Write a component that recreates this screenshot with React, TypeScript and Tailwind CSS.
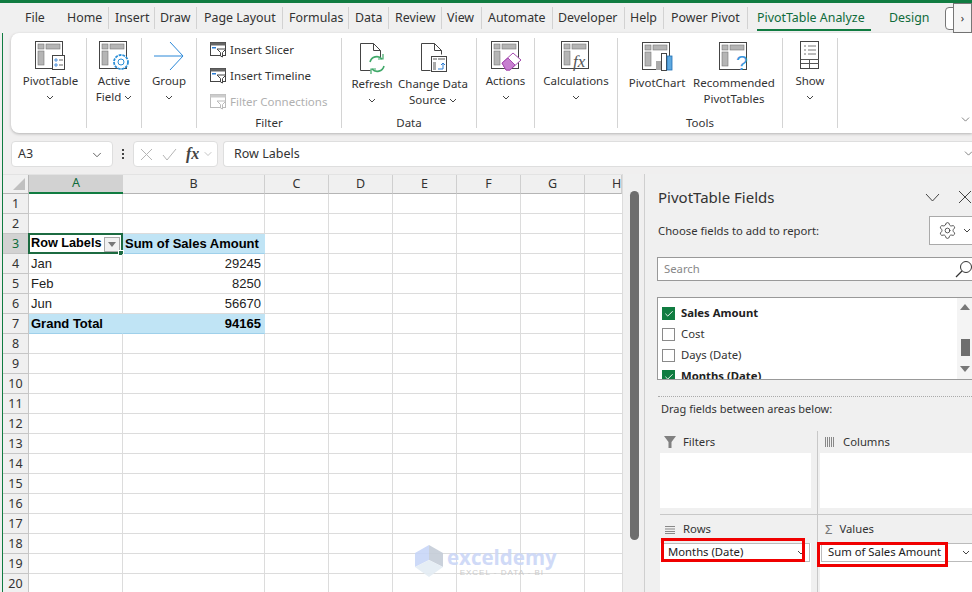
import React from "react";
import { ChevronDown, Check, Settings } from "lucide-react";

const ui = "font-['Noto_Sans','Open_Sans',sans-serif]";

const tabs = [
  { label: "File", cls: "w-[42px]" },
  { label: "Home", cls: "w-[41px]" },
  { label: "Insert", cls: "w-[46px] pl-[6px] border-l border-[#d2d2d2]" },
  { label: "Draw", cls: "w-[42px] pl-[5px] border-l border-[#d2d2d2]" },
  { label: "Page Layout", cls: "w-[86px] pl-[7px] border-l border-[#d2d2d2]" },
  { label: "Formulas", cls: "w-[66px] pl-[6px] border-l border-[#d2d2d2]" },
  { label: "Data", cls: "w-[40px] pl-[6px] border-l border-[#d2d2d2]" },
  { label: "Review", cls: "w-[53px] pl-[6px] border-l border-[#d2d2d2]" },
  { label: "View", cls: "w-[40px] pl-[5px] border-l border-[#d2d2d2]" },
  { label: "Automate", cls: "w-[71px] pl-[6px] border-l border-[#d2d2d2]" },
  { label: "Developer", cls: "w-[72px] pl-[5px] border-l border-[#d2d2d2]" },
  { label: "Help", cls: "w-[39px] pl-[5px] border-l border-[#d2d2d2]" },
  { label: "Power Pivot", cls: "w-[84px] pl-[7px] border-l border-[#d2d2d2]" },
];

function Base({ children, w = 34 }: { children?: React.ReactNode; w?: number }) {
  return (
    <svg width={w} height="32" viewBox={`0 0 ${w} 32`} fill="none">
      <rect x="1.5" y="1.5" width="27" height="27" fill="#fff" stroke="#444" />
      <rect x="4" y="4" width="6" height="5" fill="#b5b5b5" stroke="#777" strokeWidth=".6" />
      <rect x="12" y="4" width="14" height="5" fill="#b5b5b5" stroke="#777" strokeWidth=".6" />
      <rect x="4" y="11" width="6" height="14" fill="#b5b5b5" stroke="#777" strokeWidth=".6" />
      {children}
    </svg>
  );
}

function Chev({ className = "" }: { className?: string }) {
  return (
    <svg width="8" height="5" viewBox="0 0 8 5" fill="none" className={className}>
      <path d="M1 1l3 3 3-3" stroke="#444" strokeWidth="1" />
    </svg>
  );
}

function Big({ icon, lines, chevInline, chevBelow, textCls = "mt-[1px]" }: { icon: React.ReactNode; lines: string[]; chevInline?: boolean; chevBelow?: boolean; textCls?: string }) {
  return (
    <div className="flex flex-col items-center">
      <div className="h-[32px] flex items-center justify-center">{icon}</div>
      <div className={`${textCls} flex flex-col items-center text-[11.5px] leading-[16px] text-[#333] whitespace-nowrap`}>
        {lines.map((l, i) => (
          <div key={l} className="h-[16px] flex items-center gap-[3px]">
            {l}
            {chevInline && i === lines.length - 1 && <Chev />}
          </div>
        ))}
        {chevBelow && <div className="h-[16px] flex items-center"><Chev /></div>}
      </div>
    </div>
  );
}

function Group({ w, label, children, cls = "" }: { w: string; label?: string; children: React.ReactNode; cls?: string }) {
  return (
    <div className={`${w} h-[90px] mt-[5px] border-r border-[#d4d4d4] flex flex-col relative shrink-0`}>
      <div className={`flex ${cls}`}>{children}</div>
      {label && <div className="mt-auto -mb-[2px] text-center text-[11.5px] leading-[14px] text-[#333]">{label}</div>}
    </div>
  );
}

function SlicerIcon({ faded }: { faded?: boolean }) {
  const c = faded ? "#bbb" : "#444";
  return (
    <svg width="17" height="16" viewBox="0 0 17 16" fill="none">
      <rect x=".5" y=".5" width="15" height="13" fill="#fff" stroke={c} />
      <rect x=".5" y=".5" width="15" height="3" fill={faded ? "#ccc" : "#666"} />
      {!faded && <rect x="2" y="5" width="4" height="1.5" fill="#2b7cd3" />}
      <path d="M7 7h9l-3.5 3.5V15l-2-1v-3.500z" fill="#fff" stroke={c} />
    </svg>
  );
}

const colW = ["w-[94px]", "w-[142px]", "w-[64px]", "w-[64px]", "w-[64px]", "w-[64px]", "w-[64px]", "w-[37px]"];
const colNames = ["A", "B", "C", "D", "E", "F", "G", "H"];

function Cell({ i, cls = "", children, noRight }: { i: number; cls?: string; children?: React.ReactNode; noRight?: boolean }) {
  return (
    <div className={`${colW[i]} h-full shrink-0 whitespace-nowrap border-b border-[#dcdcdc] ${noRight ? "" : "border-r"} flex items-center pt-[1px] ${cls}`}>
      {children}
    </div>
  );
}

function SheetRow({ n, a, b, kind }: { n: number; a?: string; b?: string; kind?: "head" | "total" }) {
  const fill = kind ? "bg-[#c0e4f5] border-b-[#9fd0ea] border-r-[#c0e4f5]" : "";
  const bold = kind ? "font-bold text-black" : "text-[#222]";
  return (
    <div className="flex h-[20px] shrink-0">
      <div className={`w-[26px] shrink-0 border-r border-b border-[#c6c6c6] flex items-center justify-center pt-[1px] text-[12.5px] ${ui} ${n === 3 ? "bg-[#d2d2d2] text-[#0e6b3a]" : "bg-[#f0f0f0] text-[#333]"}`}>{n}</div>
      <Cell i={0} cls={`${kind === "head" ? "bg-white" : fill} ${bold} relative`}>
        {a && <span className={`pl-[2px] ${kind === "head" ? "text-[12.7px]" : ""}`}>{a}</span>}
        {kind === "head" && (
          <>
            <span className="ml-auto mr-[2px] w-[16px] h-[15px] bg-[#f1f1f1] border border-[#aaa] flex items-center justify-center">
              <svg width="8" height="5" viewBox="0 0 8 5"><path d="M0 0h8L4 5z" fill="#777" /></svg>
            </span>
            <span className="absolute -left-[1px] -top-[1px] w-[95px] h-[21px] border-2 border-[#1c6b41]" />
            <span className="absolute -right-[2px] -bottom-[3px] w-[6px] h-[6px] bg-[#1c6b41] border border-white" />
          </>
        )}
      </Cell>
      <Cell i={1} cls={`${fill} ${bold} ${kind === "head" ? "pl-[2px]" : "justify-end pr-[3px]"}`}>{b}</Cell>
      {[2, 3, 4, 5, 6].map((i) => <Cell key={i} i={i} />)}
      <Cell i={7} noRight />
    </div>
  );
}

function Check2({ on }: { on?: boolean }) {
  return (
    <span className={`w-[13px] h-[13px] shrink-0 flex items-center justify-center border ${on ? "bg-[#107c41] border-[#107c41]" : "bg-white border-[#8a8a8a]"}`}>
      {on && <Check size={10} color="#fff" strokeWidth={2.2} />}
    </span>
  );
}

export default function App() {
  const rows = Array.from({ length: 20 }, (_, i) => i + 1);
  return (
    <div className={`w-[972px] h-[592px] overflow-hidden relative flex flex-col bg-[#f0efef] ${ui} text-[12px] text-[#333]`}>
      <div className="h-[3px] shrink-0 bg-[#107c41]" />
      <div className="absolute left-[2px] top-0 bottom-0 w-[1px] bg-[#107c41]" />

      {/* tabs */}
      <div className="h-[30px] shrink-0 pl-[25px] flex items-center text-[12.4px] relative bg-[#f0f0f0]">
        {tabs.map((t) => (
          <div key={t.label} className={`${t.cls} h-[22px] flex items-center shrink-0 whitespace-nowrap text-[#333]`}>{t.label}</div>
        ))}
        <div className="w-[142px] h-[22px] pl-[9px] border-l border-[#d2d2d2] shrink-0 flex items-center text-[#0f6b3b] relative whitespace-nowrap">
          PivotTable Analyze
          <span className="absolute left-[9px] top-[22px] w-[114px] h-[2px] bg-[#107c41]" />
        </div>
        <div className="text-[#0f6b3b] whitespace-nowrap">Design</div>
        <div className="absolute left-[945px] top-[4px] w-[12px] h-[23px] border border-[#777] rounded-[4px] bg-white" />
        <div className="absolute left-[953px] top-[0px] w-[19px] h-[30px] border border-[#777] bg-[#f4f4f4] flex items-center justify-center text-[11px]">›</div>
      </div>

      {/* ribbon */}
      <div className="h-[100px] shrink-0 ml-[11px] bg-white rounded-l-[8px] shadow-[0_1px_3px_rgba(0,0,0,0.25)] flex relative">
        <Group w="w-[76px]" cls="justify-center pl-[4px] pt-[2px]">
          <Big lines={["PivotTable"]} chevBelow icon={
            <Base w={32}>
              <rect x="18.500" y="15.500" width="12" height="14" fill="#fff" stroke="#444" />
              <path d="M21 19h2v2h-2zM21 24h2v2h-2z" stroke="#2b7cd3" strokeWidth=".8" />
              <path d="M25 20h4M25 25h4" stroke="#666" />
            </Base>} />
        </Group>
        <Group w="w-[55px]" cls="justify-center pt-[2px]">
          <Big lines={["Active", "Field"]} chevInline icon={
            <Base w={32}>
              <circle cx="23" cy="22" r="7" fill="#fff" stroke="#2b8fd8" strokeWidth="1.800" strokeDasharray="2.800 1" />
              <circle cx="23" cy="22" r="3" fill="#fff" stroke="#2b8fd8" />
            </Base>} />
        </Group>
        <Group w="w-[55px]" cls="justify-center pt-[2px]">
          <Big lines={["Group"]} chevBelow icon={
            <svg width="32" height="32" viewBox="0 0 32 32" fill="none">
              <path d="M1 16h28M17 2l13 14-13 14" stroke="#2b88d8" strokeWidth="1" />
            </svg>} />
        </Group>
        <Group w="w-[145px]" label="Filter" cls="flex-col pl-[13px] pt-[3px] gap-[8px] text-[11.5px]">
          <div className="h-[18px] flex items-center gap-[3px] whitespace-nowrap"><SlicerIcon />Insert Slicer</div>
          <div className="h-[18px] flex items-center gap-[3px] whitespace-nowrap"><SlicerIcon />Insert Timeline</div>
          <div className="h-[18px] flex items-center gap-[3px] whitespace-nowrap text-[#b0b0b0]"><SlicerIcon faded />Filter Connections</div>
        </Group>
        <Group w="w-[135px]" label="Data" cls="pt-[4px]">
          <div className="w-[60px] flex justify-center">
            <Big lines={["Refresh"]} chevBelow textCls="mt-[2px]" icon={
              <svg width="30" height="32" viewBox="0 0 30 32" fill="none">
                <path d="M3.500 1.500h13l7 7v7M3.500 1.500v27h10" stroke="#444" fill="#fff" />
                <path d="M16.500 1.500v7h7" stroke="#444" />
                <path d="M13 20a7 7 0 0 1 12-3M27 24a7 7 0 0 1-12 3" stroke="#3fa868" strokeWidth="1.600" />
                <path d="M26 12v5h-5M14 32v-5h5" stroke="#3fa868" strokeWidth="1.200" />
              </svg>} />
          </div>
          <div className="w-[62px] flex justify-center">
            <Big lines={["Change Data", "Source"]} chevInline textCls="mt-[2px]" icon={
              <svg width="30" height="32" viewBox="0 0 30 32" fill="none">
                <path d="M3.500 1.500h13l7 7v4M3.500 1.500v27h9" stroke="#444" fill="#fff" />
                <path d="M16.500 1.500v7h7" stroke="#444" />
                <rect x="13.500" y="14.500" width="15" height="15" fill="#fff" stroke="#444" />
                <path d="M15 16h4v2h-4zM20 16h7v2h-7zM15 20h3v8h-3z" fill="#aaa" />
                <path d="M20 27h5v-6M23 23l2-2 2 2" stroke="#2b7cd3" />
              </svg>} />
          </div>
        </Group>
        <Group w="w-[58px]" cls="justify-center pt-[2px]">
          <Big lines={["Actions"]} chevBelow icon={
            <Base w={32}>
              <path d="M12 23l11-10 8 7-11 10h-4z" fill="#fff" stroke="#a64bb0" />
              <path d="M12 23l6-5 7 7-5 5h-4z" fill="#c77fd0" stroke="#a64bb0" />
            </Base>} />
        </Group>
        <Group w="w-[83px]" cls="justify-center pt-[2px]">
          <Big lines={["Calculations"]} chevBelow icon={
            <Base w={32}>
              <text x="13" y="27" fontFamily="'Liberation Serif',serif" fontStyle="italic" fontSize="17" fill="#555">fx</text>
            </Base>} />
        </Group>
        <Group w="w-[165px]" label="Tools" cls="pt-[3px]">
          <div className="w-[78px] flex justify-center">
            <Big lines={["PivotChart"]} textCls="mt-[2px]" icon={
              <Base w={32}>
                <rect x="15" y="20" width="5" height="9" fill="#aaa" />
                <rect x="20.500" y="12.500" width="5" height="17" fill="#fff" stroke="#444" />
                <rect x="26" y="15" width="5" height="14" fill="#5ea9e0" stroke="#1f6fb5" strokeWidth=".8" />
              </Base>} />
          </div>
          <div className="w-[76px] flex justify-center">
            <Big lines={["Recommended", "PivotTables"]} textCls="mt-[2px]" icon={
              <Base w={32}>
                <text x="18" y="29" fontFamily="'Liberation Sans',sans-serif" fontSize="21" fill="#3a96dd">?</text>
              </Base>} />
          </div>
        </Group>
        <Group w="w-[55px]" cls="justify-center pt-[2px]">
          <Big lines={["Show"]} chevBelow icon={
            <svg width="20" height="30" viewBox="0 0 20 30" fill="none">
              <rect x=".5" y=".5" width="18" height="27" stroke="#444" fill="#fff" />
              <path d="M1 18.500h18M1 22.500h18M9.500 19v8" stroke="#555" />
              <path d="M4 5h2M8 5h8M4 9h2M8 9h8M4 13h2M8 13h8" stroke="#777" />
            </svg>} />
        </Group>
        <ChevronDown size={13} strokeWidth={1.200} className="absolute left-[948px] top-[80px] text-[#444]" />
      </div>

      {/* formula bar */}
      <div className="h-[26px] shrink-0 mt-[8px] ml-[11px] flex items-stretch">
        <div className="w-[102px] bg-white rounded-[4px] border border-[#dedede] flex items-center pl-[6px] pr-[8px] pt-[1px] text-[12.5px]">
          A3<ChevronDown size={14} strokeWidth={1.300} className="ml-auto" />
        </div>
        <div className="w-[20px] flex flex-col items-center justify-center gap-[2px]">
          <span className="w-[2px] h-[2px] bg-[#444]" /><span className="w-[2px] h-[2px] bg-[#444]" /><span className="w-[2px] h-[2px] bg-[#444]" />
        </div>
        <div className="w-[85px] bg-white rounded-[4px] border border-[#dedede] flex items-center pl-[6px] gap-[9px]">
          <svg width="13" height="13" viewBox="0 0 13 13" fill="none"><path d="M1 1l11 11M12 1L1 12" stroke="#b5b5b5" /></svg>
          <svg width="15" height="13" viewBox="0 0 15 13" fill="none"><path d="M1 7l4 5L14 1" stroke="#b5b5b5" /></svg>
          <span className="flex items-center">
            <span className="font-['Liberation_Serif',serif] italic text-[16px] font-bold text-[#444] leading-none">fx</span>
            <ChevronDown size={12} strokeWidth={1} className="text-[#888] ml-[3px]" />
          </span>
        </div>
        <div className="flex-1 ml-[5px] bg-white rounded-l-[4px] border border-r-0 border-[#dedede] flex items-center pl-[10px] pt-[1px] text-[12.5px] relative">
          Row Labels
          <ChevronDown size={13} strokeWidth={1.200} className="absolute right-[-3px] top-[5px] text-[#444]" />
        </div>
      </div>

      {/* work area */}
      <div className="mt-[7px] flex-1 flex min-h-0 overflow-hidden">
        {/* sheet */}
        <div className="w-[619px] shrink-0 flex flex-col ml-[3px] bg-white font-['Liberation_Sans',sans-serif] text-[13px] overflow-hidden border-t border-[#e3e3e3]">
          <div className="flex h-[19px] shrink-0">
            <div className="w-[26px] bg-[#f0f0f0] border-r border-b border-[#b5b5b5] relative shrink-0">
              <svg width="14" height="14" viewBox="0 0 14 14" className="absolute right-[2px] bottom-[2px]"><path d="M13 1v12H1z" fill="#c0c0c0" /></svg>
            </div>
            {colNames.map((c, i) => (
              <div key={c} className={`${colW[i]} shrink-0 flex items-center ${i === 7 ? "pl-[27px]" : "justify-center"} text-[12.5px] ${ui} ${i === 0 ? "bg-[#d2d2d2] border-b-2 border-[#107c41] text-[#0e6b3a]" : "bg-[#f0f0f0] border-b border-[#b5b5b5] border-r border-r-[#cfcfcf] text-[#333]"}`}>{c}</div>
            ))}
          </div>
          {rows.map((n) => {
            if (n === 3) return <SheetRow key={n} n={n} a="Row Labels" b="Sum of Sales Amount" kind="head" />;
            if (n === 4) return <SheetRow key={n} n={n} a="Jan" b="29245" />;
            if (n === 5) return <SheetRow key={n} n={n} a="Feb" b="8250" />;
            if (n === 6) return <SheetRow key={n} n={n} a="Jun" b="56670" />;
            if (n === 7) return <SheetRow key={n} n={n} a="Grand Total" b="94165" kind="total" />;
            return <SheetRow key={n} n={n} />;
          })}
        </div>

        {/* vertical scrollbar */}
        <div className="w-[19px] shrink-0 bg-[#f0f0f0] border-l border-[#dcdcdc] flex justify-center pt-[17px]">
          <div className="w-[9px] h-[349px] ml-[4px] rounded-[5px] bg-[#6e6e6e]" />
        </div>

        {/* panel */}
        <div className="flex-1 ml-[3px] pl-[13px] border-l border-[#cfcfcf] bg-[#f0f0f0] flex flex-col min-w-0 relative text-[11.3px]">
          <div className="h-[34px] flex items-center shrink-0 text-[15px] mt-[6px] text-[#333] relative">
            PivotTable Fields
            <svg width="15" height="9" viewBox="0 0 15 9" fill="none" className="absolute left-[267px] top-[13px]"><path d="M1 1l6.500 7L14 1" stroke="#444" /></svg>
            <svg width="14" height="14" viewBox="0 0 14 14" fill="none" className="absolute left-[300px] top-[10px]"><path d="M1 1l12 12M13 1L1 13" stroke="#444" /></svg>
          </div>
          <div className="h-[29px] mt-[2px] pt-[2px] flex items-center shrink-0 relative">
            Choose fields to add to report:
            <div className="absolute left-[271px] top-0 w-[60px] h-[29px] bg-white border border-[#aaa] flex items-center pl-[8px] gap-[6px]">
              <Settings size={19} strokeWidth={1} /><Chev />
            </div>
          </div>
          <div className="h-[24px] mt-[12px] shrink-0 w-[330px] -ml-[1px] bg-white border border-[#999] flex items-center pl-[6px] text-[#888] relative">
            Search
            <svg width="18" height="18" viewBox="0 0 18 18" fill="none" className="absolute left-[297px] top-[2px]"><circle cx="11" cy="7" r="5.500" stroke="#333" /><path d="M7 11l-6 6" stroke="#333" strokeWidth="1.300" /></svg>
          </div>
          <div className="h-[83px] mt-[16px] shrink-0 w-[330px] -ml-[1px] bg-white border border-[#999] pl-[4px] overflow-hidden relative">
            {[
              { t: "Sales Amount", on: true },
              { t: "Cost" },
              { t: "Days (Date)" },
              { t: "Months (Date)", on: true },
            ].map((f) => (
              <div key={f.t} className={`h-[21px] flex items-center gap-[6px] first:mt-[5px] ${f.on ? "font-bold text-[#222]" : "text-[#333]"}`}>
                <Check2 on={f.on} />{f.t}
              </div>
            ))}
            <div className="absolute left-[299px] top-0 bottom-0 w-[16px] bg-[#f4f4f4]">
              <svg width="10" height="6" viewBox="0 0 10 6" className="absolute left-[3px] top-[6px]"><path d="M5 0l5 6H0z" fill="#777" /></svg>
              <div className="absolute left-[4px] top-[41px] w-[9px] h-[17px] bg-[#6e6e6e]" />
              <svg width="10" height="6" viewBox="0 0 10 6" className="absolute left-[3px] top-[68px]"><path d="M5 6L0 0h10z" fill="#777" /></svg>
            </div>
          </div>
          <div className="mt-[16px] shrink-0 border-t border-dotted border-[#aaa] w-[320px]" />
          <div className="h-[24px] shrink-0 pl-[3px] flex items-center text-[11px]">Drag fields between areas below:</div>

          <div className="mt-[10px] shrink-0 flex w-[330px] -ml-[13px] pl-[15px]">
            <div className="w-[158px] pr-[6px] pb-[6px] border-r border-[#c8c8c8]">
              <div className="h-[22px] flex items-center gap-[7px] pl-[4px] text-[#333]">
                <svg width="12" height="12" viewBox="0 0 12 12"><path d="M0 0h12L7.500 6v6h-3V6z" fill="#808080" /></svg>
                Filters
              </div>
              <div className="h-[55px] bg-white w-[151px]" />
            </div>
            <div className="pl-[2px] flex-1">
              <div className="h-[22px] flex items-center gap-[9px] pl-[5px]">
                <svg width="9" height="10" viewBox="0 0 9 10"><path d="M.5 0v10M2.500 0v10M4.500 0v10M6.500 0v10M8.500 0v10" stroke="#888" /></svg>
                Columns
              </div>
              <div className="h-[55px] bg-white" />
            </div>
          </div>
          <div className="shrink-0 flex w-[330px] -ml-[13px] pl-[15px]">
            <div className="w-[158px] pr-[6px] border-r border-[#c8c8c8] border-t border-t-[#c8c8c8] pt-[5px]">
              <div className="h-[19px] mb-[4px] flex items-center gap-[8px] pl-[5px]">
                <svg width="10" height="8" viewBox="0 0 10 8"><path d="M0 .5h10M0 3h10M0 5.500h10M0 7.500h10" stroke="#888" /></svg>
                Rows
              </div>
              <div className="h-[60px] bg-white w-[151px]">
                <div className="h-[19px] ml-[1px] w-[149px] border border-[#bbb] flex items-center pl-[6px] pr-[4px] text-[#222]">
                  Months (Date)<Chev className="ml-auto" />
                </div>
              </div>
            </div>
            <div className="pl-[2px] flex-1 pt-[5px] border-t border-[#c8c8c8]">
              <div className="h-[19px] mb-[4px] flex items-center gap-[7px] pl-[5px]">
                <span className="text-[13px] text-[#777] leading-none">Σ</span>
                Values
              </div>
              <div className="h-[60px] bg-white">
                <div className="h-[19px] ml-[1px] border border-[#bbb] flex items-center pl-[6px] pr-[4px] text-[#222]">
                  Sum of Sales Amount<Chev className="ml-auto" />
                </div>
              </div>
            </div>
          </div>
        </div>
      </div>

      {/* red callouts */}
      <div className="absolute left-[661px] top-[538px] w-[144px] h-[24px] border-[3px] border-[#f00000]" />
      <div className="absolute left-[817px] top-[542px] w-[131px] h-[25px] border-[3px] border-[#f00000]" />

      {/* watermark */}
      <div className="absolute left-[415px] top-[545px] flex items-start gap-[4px] pointer-events-none opacity-90">
        <svg width="28" height="32" viewBox="0 0 28 32">
          <path d="M14 0l14 8v14L14 15z" fill="#c5cdd8" />
          <path d="M14 0L0 8v14l14-7z" fill="#c8d6f8" />
          <path d="M0 22l14-7 14 7-14 10z" fill="#e4edf4" />
        </svg>
        <div className="flex flex-col items-center">
          <div className="text-[20.5px] leading-[20px] mt-[2px] font-bold text-[#cbd7f7] font-['Open_Sans',sans-serif]">exceldemy</div>
          <div className="text-[8px] leading-[9px] tracking-[1px] mt-[1px] text-[#c8c8c8] font-['Liberation_Sans',sans-serif]">EXCEL - DATA - BI</div>
        </div>
      </div>
    </div>
  );
}
